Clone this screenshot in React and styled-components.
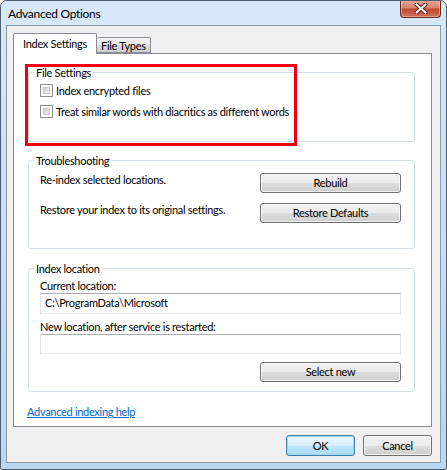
import React from "react";
import styled, { createGlobalStyle } from "styled-components";

const Global = createGlobalStyle`
  html, body { margin: 0; padding: 0; }
  body {
    font-family: Lato, "Liberation Sans", sans-serif;
    font-size: 11px;
    letter-spacing: -0.3px;
    color: #000;
    background: #fff;
  }
  * { box-sizing: border-box; }
`;

const Window = styled.div`
  width: 447px;
  height: 470px;
  border: 1px solid #4d5f73;
  border-radius: 7px 7px 2px 2px;
  background: linear-gradient(180deg, #d7e8f8 0%, #cbe0f4 40%, #bcd6ef 100%);
  display: flex;
  flex-direction: column;
  overflow: hidden;
`;

const TitleBar = styled.div`
  height: 24px;
  display: flex;
  align-items: flex-start;
  padding-left: 7px;
`;

const Title = styled.div`
  margin-top: 5px;
  font-size: 12px;
  line-height: 15px;
`;

const CloseButton = styled.div`
  margin-left: auto;
  margin-right: 5px;
  margin-top: -1px;
  width: 41px;
  height: 18px;
  border: 1px solid #6b2a1f;
  border-top: none;
  border-radius: 0 0 4px 4px;
  background: linear-gradient(180deg, #e7a99b 0%, #d98470 45%, #c24a31 55%, #d0715c 100%);
  box-shadow: inset 0 0 0 1px rgba(255, 255, 255, 0.35);
  display: flex;
  align-items: center;
  justify-content: center;
`;

const Client = styled.div`
  flex: 1;
  margin: 0 5px 6px 5px;
  border: 1px solid #8e9aa6;
  background: #f0f0f0;
  display: flex;
  flex-direction: column;
  padding: 7px 8px 0 6px;
`;

const TabStrip = styled.div`
  display: flex;
  align-items: flex-end;
  height: 20px;
  position: relative;
  z-index: 1;
`;

const Tab = styled.div`
  height: ${(p) => (p.$active ? "21px" : "16px")};
  padding: 0 ${(p) => (p.$active ? "9px" : "4px")};
  border: 1px solid #898c95;
  border-bottom: ${(p) => (p.$active ? "none" : "1px solid #898c95")};
  border-left: ${(p) => (p.$active ? "1px solid #898c95" : "none")};
  border-radius: 2px 2px 0 0;
  background: ${(p) =>
    p.$active ? "#fff" : "linear-gradient(180deg, #f2f2f2 0%, #ebebeb 50%, #dcdcdc 51%, #cfcfcf 100%)"};
  line-height: ${(p) => (p.$active ? "19px" : "15px")};
  margin-bottom: ${(p) => (p.$active ? "-1px" : "0")};
  white-space: nowrap;
`;

const Panel = styled.div`
  height: 374px;
  border: 1px solid #898c95;
  background: #fff;
  padding: 18px 16px 0 14px;
  display: flex;
  flex-direction: column;
`;

const Group = styled.div`
  position: relative;
  border: 1px solid #d5dfe5;
  border-radius: 3px;
  height: ${(p) => p.$h}px;
  margin-top: ${(p) => p.$mt || 0}px;
  padding: ${(p) => p.$pt}px 13px 0 11px;
  display: flex;
  flex-direction: column;
`;

const GroupTitle = styled.span`
  position: absolute;
  top: -8px;
  left: 5px;
  padding: 0 2px;
  background: #fff;
  line-height: 15px;
`;

const Highlight = styled.div`
  position: absolute;
  left: -4px;
  top: -9px;
  width: 272px;
  height: 82px;
  border: 3px solid #f0000f;
  pointer-events: none;
`;

const CheckRow = styled.label`
  display: flex;
  align-items: center;
  gap: 3px;
  height: 15px;
  margin-bottom: ${(p) => p.$mb || 0}px;
`;

const Check = styled.span`
  width: 13px;
  height: 13px;
  border: 1px solid #8f8f8f;
  background: #fff;
  padding: 2px;
  display: inline-block;
  flex: none;
  &::after {
    content: "";
    display: block;
    width: 7px;
    height: 7px;
    background: linear-gradient(135deg, #cbcfd5 0%, #f0f0f0 100%);
    border: 1px solid #c7c7c7;
    box-sizing: border-box;
  }
`;

const ActionRow = styled.div`
  display: flex;
  justify-content: space-between;
  align-items: flex-start;
  margin-bottom: ${(p) => p.$mb || 0}px;
`;

const RowText = styled.span`
  line-height: 15px;
  margin-top: -1px;
`;

const Button = styled.button`
  font: inherit;
  letter-spacing: inherit;
  color: #000;
  width: ${(p) => p.$w || 141}px;
  height: ${(p) => p.$h || 20}px;
  border: 1px solid ${(p) => (p.$default ? "#3c7fb1" : "#707070")};
  border-radius: 3px;
  background: ${(p) =>
    p.$default
      ? "linear-gradient(180deg, #eaf6fd 0%, #d9f0fc 50%, #bee6fd 51%, #a7d9f5 100%)"
      : "linear-gradient(180deg, #f2f2f2 0%, #ebebeb 50%, #dddddd 51%, #cfcfcf 100%)"};
  box-shadow: inset 0 0 0 1px ${(p) => (p.$default ? "#9fd5f5" : "rgba(255,255,255,0.7)")};
  padding: 0;
  line-height: 16px;
  align-self: ${(p) => p.$align || "auto"};
  margin-top: ${(p) => p.$mt || 0}px;
`;

const FieldLabel = styled.div`
  line-height: 15px;
  margin-top: ${(p) => p.$mt || 0}px;
`;

const TextBox = styled.div`
  height: ${(p) => p.$h}px;
  border: 1px solid #e2e3ea;
  border-top-color: #abadb3;
  border-bottom-color: #e3e9ef;
  background: #fff;
  padding: 0 4px;
  line-height: 18px;
`;

const HelpLink = styled.a`
  color: #0066cc;
  text-decoration: underline;
  margin: 12px 0 0 -1px;
  line-height: 15px;
  align-self: flex-start;
  cursor: pointer;
`;

const Footer = styled.div`
  display: flex;
  justify-content: flex-end;
  gap: 8px;
  padding-top: 8px;
`;

function CloseGlyph() {
  return (
    <svg width="14" height="11" viewBox="0 0 14 11">
      <path d="M2.5 1.5 L11.5 9.5 M11.5 1.5 L2.5 9.5" stroke="#5a1d12" strokeWidth="4" strokeLinecap="round" />
      <path d="M2.5 1.5 L11.5 9.5 M11.5 1.5 L2.5 9.5" stroke="#ffffff" strokeWidth="2.2" strokeLinecap="round" />
    </svg>
  );
}

export default function App() {
  return (
    <>
      <Global />
      <Window>
        <TitleBar>
          <Title>Advanced Options</Title>
          <CloseButton>
            <CloseGlyph />
          </CloseButton>
        </TitleBar>
        <Client>
          <TabStrip>
            <Tab $active>Index Settings</Tab>
            <Tab>File Types</Tab>
          </TabStrip>
          <Panel>
            <Group $h={70} $pt={10}>
              <GroupTitle>File Settings</GroupTitle>
              <Highlight />
              <CheckRow $mb={6}>
                <Check />
                Index encrypted files
              </CheckRow>
              <CheckRow>
                <Check />
                Treat similar words with diacritics as different words
              </CheckRow>
            </Group>
            <Group $h={89} $mt={18} $pt={12}>
              <GroupTitle>Troubleshooting</GroupTitle>
              <ActionRow $mb={10}>
                <RowText>Re-index selected locations.</RowText>
                <Button>Rebuild</Button>
              </ActionRow>
              <ActionRow>
                <RowText>Restore your index to its original settings.</RowText>
                <Button>Restore Defaults</Button>
              </ActionRow>
            </Group>
            <Group $h={124} $mt={19} $pt={9}>
              <GroupTitle>Index location</GroupTitle>
              <FieldLabel>Current location:</FieldLabel>
              <TextBox $h={21}>C:\ProgramData\Microsoft</TextBox>
              <FieldLabel $mt={5}>New location, after service is restarted:</FieldLabel>
              <TextBox $h={20}></TextBox>
              <Button $align="flex-end" $mt={8}>Select new</Button>
            </Group>
            <HelpLink>Advanced indexing help</HelpLink>
          </Panel>
          <Footer>
            <Button $default $w={69} $h={21}>OK</Button>
            <Button $w={69} $h={21}>Cancel</Button>
          </Footer>
        </Client>
      </Window>
    </>
  );
}
